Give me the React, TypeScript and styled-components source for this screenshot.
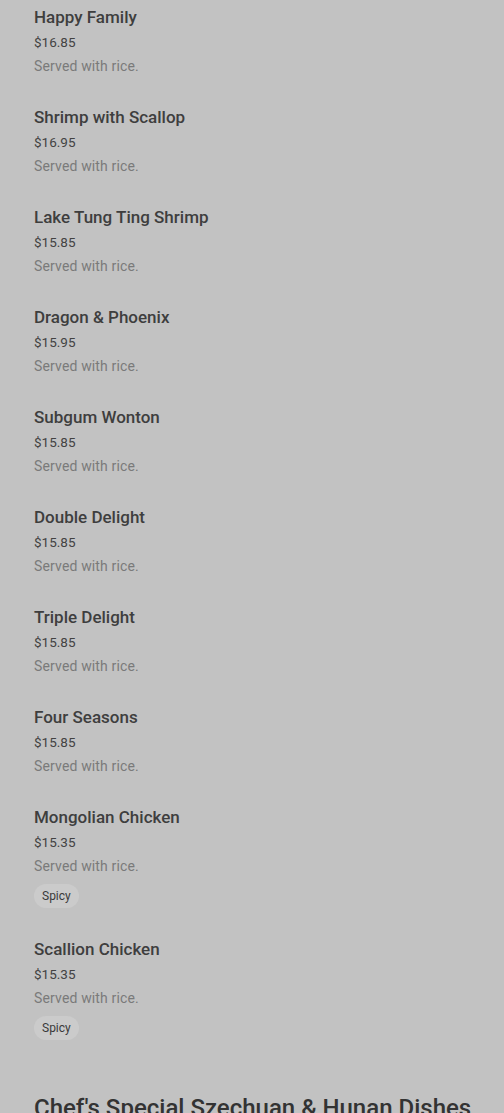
import styled, { createGlobalStyle } from 'styled-components';

const GlobalStyle = createGlobalStyle`
   html, body {
      margin: 0;
      padding: 0;
      background: #c2c2c2;
      font-family: Roboto, 'Liberation Sans', Arial, sans-serif;
   }
`;

const Page = styled.div`
   padding: 5px 34px 0;
   min-height: 1113px;
   box-sizing: border-box;
   overflow: hidden;
`;

const ItemList = styled.div`
   display: flex;
   flex-direction: column;
   gap: 27px;
`;

const Item = styled.div`
   display: flex;
   flex-direction: column;
`;

const Title = styled.div`
   font-size: 17px;
   line-height: 24px;
   font-weight: 500;
   color: #3e3e3e;
`;

const Price = styled.div`
   margin-top: 1px;
   font-size: 13.5px;
   line-height: 24px;
   color: #424242;
`;

const Desc = styled.div`
   font-size: 14px;
   line-height: 24px;
   color: #7a7a7a;
   letter-spacing: 0.15px;
`;

const Tags = styled.div`
   display: flex;
   gap: 6px;
   margin: 6px 0 2px;
`;

const Tag = styled.span`
   display: inline-flex;
   align-items: center;
   height: 24px;
   padding: 0 8px;
   border-radius: 12px;
   background: #cbcbcb;
   font-size: 12px;
   color: #3a3a3a;
`;

const SectionTitle = styled.h2`
   margin: 51px 0 0;
   font-size: 24px;
   line-height: 30px;
   font-weight: 500;
   color: #333;
   white-space: nowrap;
`;

type Dish = { name: string; price: string; tags?: string[] };

const dishes: Dish[] = [
   { name: 'Happy Family', price: '$16.85' },
   { name: 'Shrimp with Scallop', price: '$16.95' },
   { name: 'Lake Tung Ting Shrimp', price: '$15.85' },
   { name: 'Dragon & Phoenix', price: '$15.95' },
   { name: 'Subgum Wonton', price: '$15.85' },
   { name: 'Double Delight', price: '$15.85' },
   { name: 'Triple Delight', price: '$15.85' },
   { name: 'Four Seasons', price: '$15.85' },
   { name: 'Mongolian Chicken', price: '$15.35', tags: ['Spicy'] },
   { name: 'Scallion Chicken', price: '$15.35', tags: ['Spicy'] },
];

export default function App() {
   return (
      <>
         <GlobalStyle />
         <Page>
            <ItemList>
               {dishes.map(dish => (
                  <Item key={dish.name}>
                     <Title>{dish.name}</Title>
                     <Price>{dish.price}</Price>
                     <Desc>Served with rice.</Desc>
                     {dish.tags && (
                        <Tags>
                           {dish.tags.map(tag => (
                              <Tag key={tag}>{tag}</Tag>
                           ))}
                        </Tags>
                     )}
                  </Item>
               ))}
            </ItemList>
            <SectionTitle>Chef's Special Szechuan &amp; Hunan Dishes</SectionTitle>
         </Page>
      </>
   );
}
